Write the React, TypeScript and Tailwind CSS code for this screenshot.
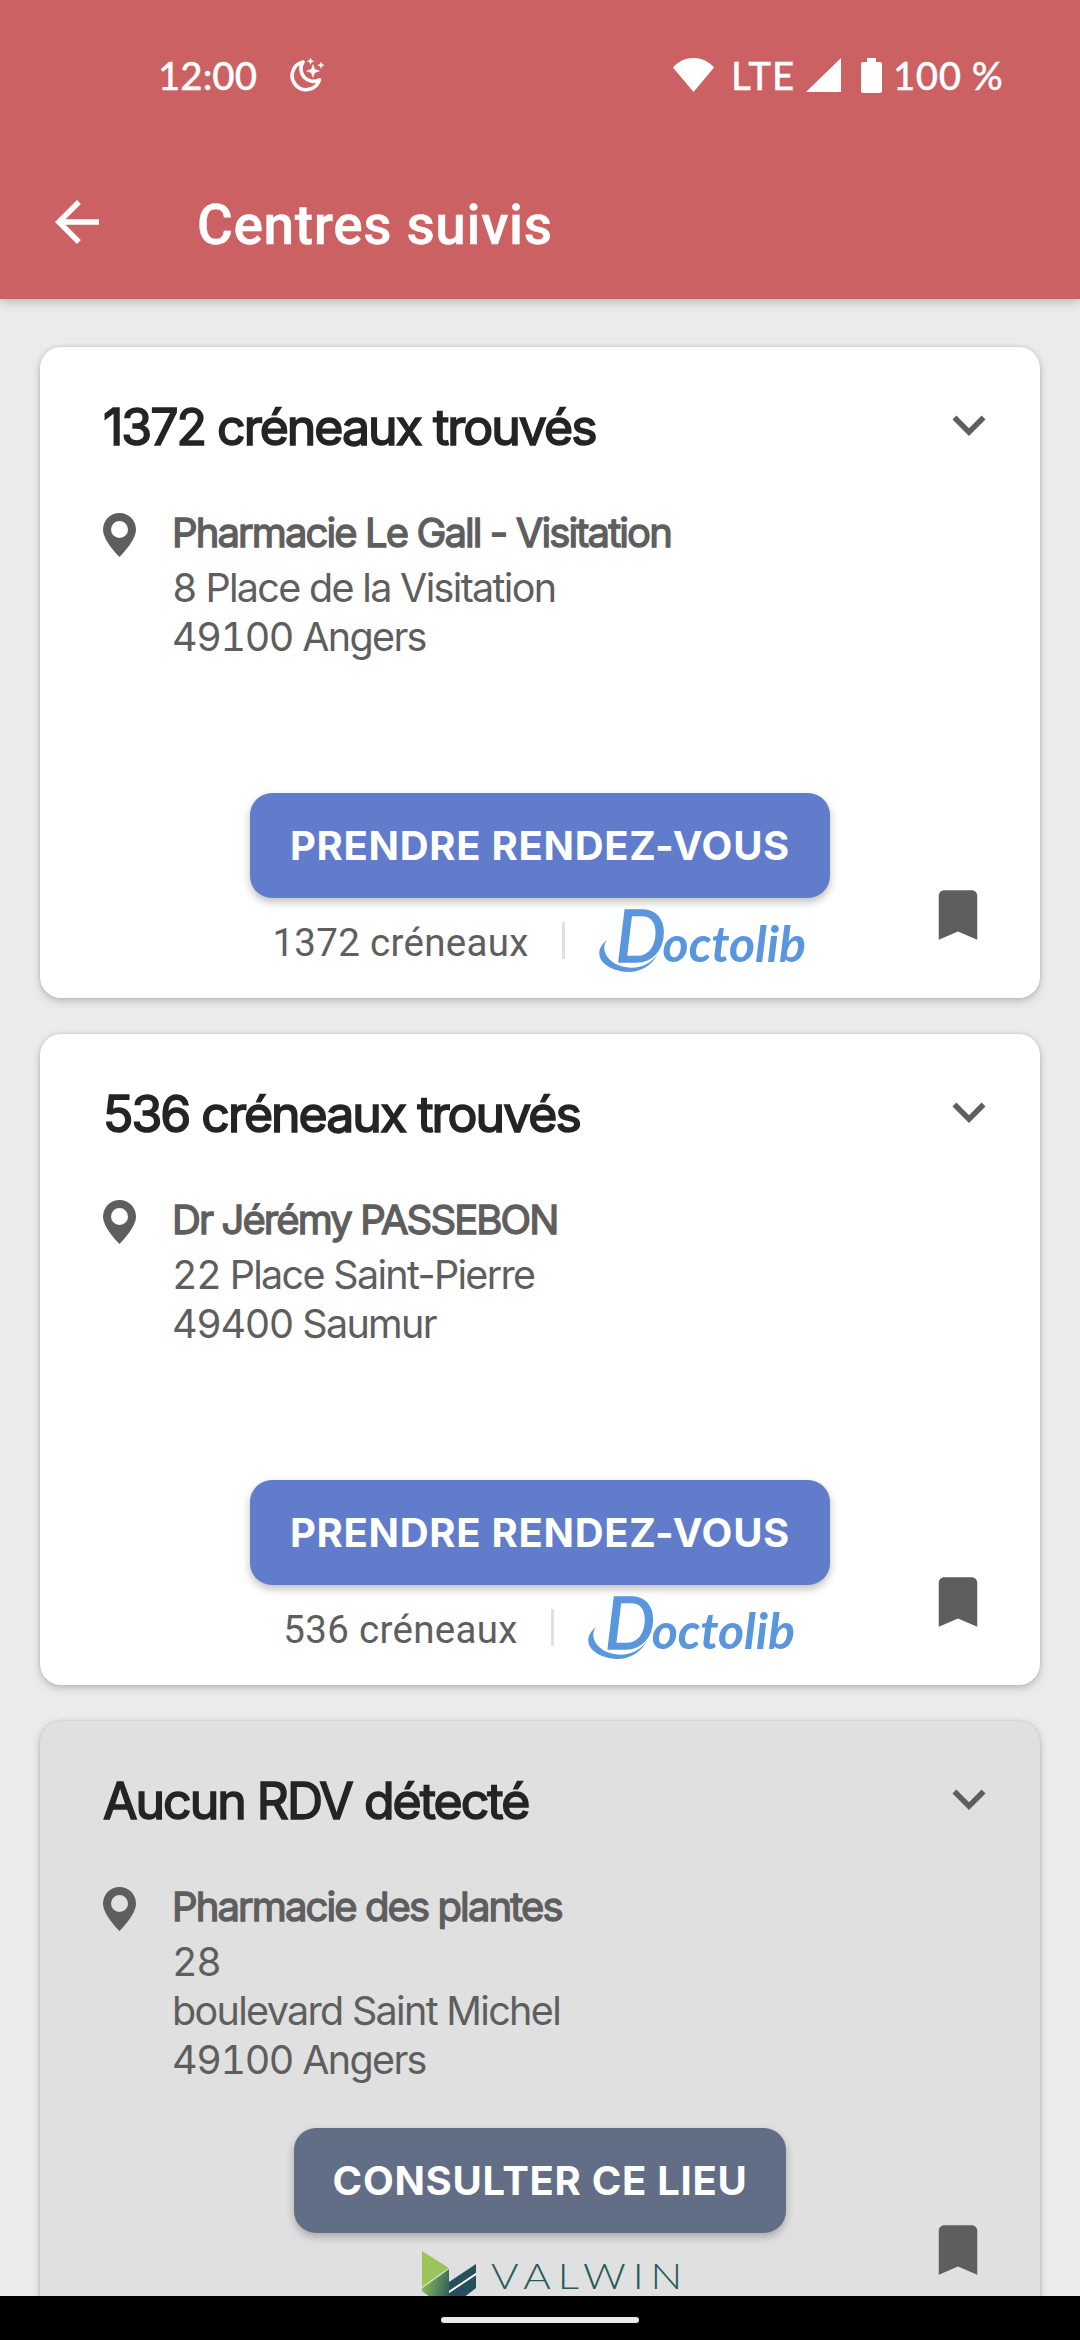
import type { ReactNode } from "react";

const MoonIcon = () => (
  <svg className="ml-[35px] h-[34px] w-[34px]" viewBox="0 0 34 34" fill="none">
    <path
      d="M13 4A14 14 0 1 0 29.500 21.800A12.500 12.500 0 0 1 13 4Z"
      stroke="white"
      strokeWidth="3.600"
      strokeLinejoin="round"
    />
    <path
      d="M23 6.500l1.700 4.800 4.800 1.700-4.800 1.700-1.700 4.800-1.700-4.800-4.800-1.700 4.800-1.700zM20.500 0l.9 2.300 2.300.9-2.300.9-.9 2.300-.9-2.300-2.300-.9 2.300-.9zM31 4l.9 2.300 2.300.9-2.300.9-.9 2.300-.9-2.300-2.300-.9 2.300-.9z"
      fill="white"
      stroke="white"
      strokeWidth="0.400"
    />
  </svg>
);

const StatusBar = () => (
  <div className="flex h-[150px] items-center justify-between pr-[78px] pl-[158px] font-['Lato'] text-[38.500px] leading-none font-medium text-white [-webkit-text-stroke:0.300px_white]">
    <div className="flex items-center">
      <span className="w-[97px] whitespace-nowrap">12:00</span>
      <MoonIcon />
    </div>
    <div className="flex items-center">
      <svg className="h-[34px] w-[41px]" viewBox="0 0 41 34" fill="white">
        <path d="M20.500 34L0 9.500C11 -3.200 30 -3.200 41 9.500Z" />
      </svg>
      <span className="ml-[17px] w-[65px] tracking-[1px]">LTE</span>
      <svg className="ml-[10px] h-[34px] w-[35px]" viewBox="0 0 35 34" fill="white">
        <path d="M35 0V34H0Z" />
      </svg>
      <svg className="ml-[20px] h-[35px] w-[21px]" viewBox="0 0 21 35" fill="white">
        <path d="M6 0h9v4h4a2 2 0 0 1 2 2v27a2 2 0 0 1-2 2H2a2 2 0 0 1-2-2V6a2 2 0 0 1 2-2h4z" />
      </svg>
      <span className="ml-[11px] w-[109px] tracking-[0.500px] whitespace-nowrap">100 %</span>
    </div>
  </div>
);

const Header = () => (
  <header className="relative z-10 h-[299px] shrink-0 bg-[#cc6163] shadow-[0_2px_10px_rgba(0,0,0,0.25)]">
    <StatusBar />
    <div className="flex h-[144px] items-center pl-[44px]">
      <svg className="h-[66px] w-[66px]" viewBox="0 0 24 24" fill="white">
        <path d="M20 11H7.830l5.590-5.590L12 4l-8 8 8 8 1.410-1.410L7.830 13H20v-2z" />
      </svg>
      <h1 className="ml-[87px] pt-[6px] font-['Roboto'] text-[55px] leading-none font-medium tracking-[0.600px] text-white [-webkit-text-stroke:0.400px_white]">
        Centres suivis
      </h1>
    </div>
  </header>
);

const DoctolibLogo = () => (
  <div className="relative h-[62px] w-[207px] font-['Lato'] font-bold text-[#5996dd] italic">
    <svg className="absolute inset-0 h-full w-full" viewBox="0 0 207 62" fill="currentColor">
      <path d="M9 30C3 38 7 49 20 55C36 61 50 57 60 44C51 60 36 64 22 61C2 57-6 42 9 30Z" />
    </svg>
    <div className="absolute top-[-10px] left-[18px] flex items-baseline leading-[70px] whitespace-nowrap">
      <span className="w-[47px] text-[71px] font-normal [-webkit-text-stroke:1.500px_#5996dd]">D</span>
      <span className="text-[50px] tracking-[-0.100px]">octolib</span>
    </div>
  </div>
);

const ValwinLogo = () => (
  <div className="flex h-[68px] w-[257px] items-start">
    <svg className="h-[68px] w-[55px] shrink-0" viewBox="0 0 55 68">
      <defs>
        <linearGradient id="fold" x1="0" y1="0.3" x2="1" y2="0.7">
          <stop offset="0" stopColor="#8fbd5a" />
          <stop offset="1" stopColor="#2c5b5c" />
        </linearGradient>
      </defs>
      <path d="M0 0L27 17L0 36Z" fill="#9bc45b" />
      <path d="M0 37L27 18V60L0 40Z" fill="url(#fold)" />
      <path d="M27 31L54 13V22L27 40Z" fill="#264f5b" />
      <path d="M27 42L54 24V37L27 58Z" fill="#264f5b" />
      <path d="M27 40L54 22V24L27 42Z" fill="white" />
      <path d="M0 36L27 17V18L0 37Z" fill="#dbe8c9" />
    </svg>
    <span className="mt-[6px] ml-[14px] origin-left scale-x-[1.200] font-['Lato'] text-[35px] leading-[36px] font-light tracking-[5.700px] text-[#265b5c]">
      VALWIN
    </span>
  </div>
);

const AddressLine = ({ text }: { text: string }) => {
  const [, digits, rest] = text.match(/^(\d*\s?)(.*)$/) as RegExpMatchArray;
  return (
    <p className="text-[39.500px] leading-[49px] tracking-[-1.680px]">
      {digits && <span className="tracking-[-1.400px] tabular-nums">{digits}</span>}
      {rest}
    </p>
  );
};

interface CenterCardProps {
  title: string;
  name: string;
  address: string[];
  muted?: boolean;
  action: string;
  children: ReactNode;
}

const CenterCard = ({ title, name, address, muted, action, children }: CenterCardProps) => (
  <article
    className={`relative flex h-[651px] shrink-0 flex-col rounded-[21px] shadow-[0_3px_8px_rgba(0,0,0,0.2),0_0_3px_rgba(0,0,0,0.12)] ${
      muted ? "bg-[#e0e0e0]" : "bg-white"
    }`}
  >
    <div className="flex h-[111px] items-start justify-between pr-[38px] pl-[63px]">
      <h2 className="pt-[50px] font-['Inter'] text-[50px] leading-[60px] font-normal tracking-[-2px] whitespace-nowrap text-[#242424] [-webkit-text-stroke:1.600px_#242424]">
        {title}
      </h2>
      <svg className="mt-[45px] h-[66px] w-[66px]" viewBox="0 0 24 24" fill="#5e5e5e">
        <path d="M16.590 8.590L12 13.170 7.410 8.590 6 10l6 6 6-6z" />
      </svg>
    </div>
    <div className="mt-[47px] flex items-start pl-[63px] font-['Inter'] text-[#5e5e5e]">
      <svg className="mt-[8px] h-[44px] w-[33px]" viewBox="0 0 33 44" fill="#5e5e5e">
        <path
          fillRule="evenodd"
          d="M16.500 0A16.500 16.500 0 0 0 0 16.500C0 28 16.500 44 16.500 44S33 28 33 16.500A16.500 16.500 0 0 0 16.500 0ZM16.500 8a8.500 8.500 0 1 1 0 17a8.500 8.500 0 0 1 0-17Z"
        />
      </svg>
      <div className="ml-[36px] whitespace-nowrap">
        <p className="h-[59px] text-[40px] leading-[56px] tracking-[-1.900px] [-webkit-text-stroke:1.300px_#5e5e5e]">
          {name}
        </p>
        {address.map((line) => (
          <AddressLine key={line} text={line} />
        ))}
      </div>
    </div>
    <div className={`absolute inset-x-0 flex flex-col items-center ${muted ? "top-[407px]" : "top-[446px]"}`}>
      <button
        className={`h-[105px] rounded-[22px] font-['Inter'] text-[40px] font-bold tracking-[0.700px] whitespace-nowrap text-white shadow-[0_4px_8px_rgba(0,0,0,0.25)] ${
          muted ? "w-[492px] bg-[#626d86]" : "w-[580px] bg-[#607ccb]"
        }`}
      >
        {action}
      </button>
      {children}
    </div>
    <svg
      className={`absolute right-[49px] h-[66px] w-[66px] ${muted ? "top-[496px]" : "top-[535px]"}`}
      viewBox="0 0 24 24"
      fill="#5e5e5e"
    >
      <path d="M17 3H7c-1.100 0-2 .9-2 2v16l7-3 7 3V5c0-1.100-.9-2-2-2z" />
    </svg>
  </article>
);

const SlotSummary = ({ slots }: { slots: number }) => (
  <div className="mt-[12px] flex items-start pr-[3px]">
    <span className="mt-[10px] font-['Roboto'] text-[38.500px] leading-[46px] tracking-[0.300px] text-[#5e5e5e]">
      {slots} créneaux
    </span>
    <span className="mt-[12px] mr-[33px] ml-[33px] h-[37px] w-[3px] bg-[#e0e0e0]" />
    <DoctolibLogo />
  </div>
);

export default function App() {
  return (
    <div className="flex h-[2340px] w-[1080px] flex-col overflow-hidden bg-[#ebebeb]">
      <Header />
      <main className="flex h-[1997px] shrink-0 flex-col gap-[36px] overflow-hidden px-[40px] pt-[48px]">
        <CenterCard
          title="1372 créneaux trouvés"
          name="Pharmacie Le Gall - Visitation"
          address={["8 Place de la Visitation", "49100 Angers"]}
          action="PRENDRE RENDEZ-VOUS"
        >
          <SlotSummary slots={1372} />
        </CenterCard>
        <CenterCard
          title="536 créneaux trouvés"
          name="Dr Jérémy PASSEBON"
          address={["22 Place Saint-Pierre", "49400 Saumur"]}
          action="PRENDRE RENDEZ-VOUS"
        >
          <SlotSummary slots={536} />
        </CenterCard>
        <CenterCard
          title="Aucun RDV détecté"
          name="Pharmacie des plantes"
          address={["28", "boulevard Saint Michel", "49100 Angers"]}
          action="CONSULTER CE LIEU"
          muted
        >
          <div className="mt-[18px] pl-[20px]">
            <ValwinLogo />
          </div>
        </CenterCard>
      </main>
      <footer className="flex h-[44px] shrink-0 justify-center bg-black pt-[21px]">
        <div className="h-[6px] w-[198px] rounded-full bg-[#ebebeb]" />
      </footer>
    </div>
  );
}
